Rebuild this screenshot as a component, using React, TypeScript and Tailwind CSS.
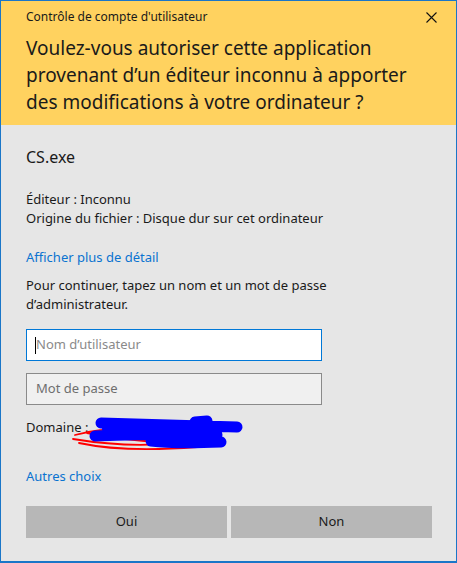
import React from 'react';

function Scribble() {
  return (
    <svg className="absolute left-[66px] top-[410px]" width="190" height="42" viewBox="0 0 190 42" fill="none">
      {/* red pen underneath */}
      <path d="M8 24 C 30 18, 60 16, 90 19 M6 28 C 30 32, 70 36, 110 32 M12 32 C 40 38, 80 40, 130 36 M20 22 C 50 28, 90 32, 140 34"
        stroke="#ff0000" strokeWidth="1.8" strokeLinecap="round" />
      {/* blue pen over it */}
      <path d="M34 12 C 60 13, 100 14, 170 16 M28 25 C 60 24, 100 23, 150 24 M84 30 C 100 32, 130 32, 154 31 M128 11 L140 10"
        stroke="#0000ff" strokeWidth="11" strokeLinecap="round" />
      <path d="M40 18 C 80 18, 120 19, 150 20 M60 22 L140 26 M90 28 L150 29"
        stroke="#0000ff" strokeWidth="10" strokeLinecap="round" />
    </svg>
  );
}

export default function App() {
  return (
    <div className="relative w-[457px] h-[563px] bg-[#e6e6e6] border border-b-2 border-[#1a76c8] font-['Noto_Sans',sans-serif] text-[#1a1a1a] overflow-hidden">
      <div className="bg-[#ffd25f] h-[124px] px-[25px]">
        <div className="flex items-center justify-between h-[32px]">
          <span className="text-[12px]">Contrôle de compte d'utilisateur</span>
          <svg width="11" height="11" viewBox="0 0 11 11" className="mr-[-6px]">
            <path d="M0.5 0.5 L10.5 10.5 M10.5 0.5 L0.5 10.5" stroke="#111" strokeWidth="1.1" />
          </svg>
        </div>
        <p className="text-[19px] leading-[27px] mt-[2px]">
          Voulez-vous autoriser cette application provenant d’un éditeur inconnu à apporter des modifications à votre ordinateur ?
        </p>
      </div>

      <div className="px-[25px]">
        <div className="text-[16px] mt-[21px] leading-[22px]">CS.exe</div>
        <div className="text-[13px] leading-[19px] mt-[22px]">
          <div>Éditeur : Inconnu</div>
          <div>Origine du fichier : Disque dur sur cet ordinateur</div>
        </div>
        <div className="text-[13px] text-[#0a73d0] mt-[20px] leading-[18px]">Afficher plus de détail</div>
        <div className="text-[13px] leading-[18.5px] mt-[10px]">
          Pour continuer, tapez un nom et un mot de passe
          <br />d’administrateur.
        </div>

        <div className="mt-[16px] w-[296px] h-[32px] border border-[#0078d7] bg-white flex items-center px-[8px]">
          <span className="w-px h-[17px] bg-black" />
          <span className="text-[13px] text-[#8a8a8a]">Nom d’utilisateur</span>
        </div>
        <div className="mt-[12px] w-[296px] h-[32px] border border-[#8a8a8a] bg-[#f0f0f0] flex items-center px-[9px]">
          <span className="text-[13px] text-[#6e6e6e]">Mot de passe</span>
        </div>

        <div className="text-[13px] mt-[13px] leading-[18px]">Domaine : </div>

        <div className="text-[13px] text-[#0a73d0] mt-[31px] leading-[18px]">Autres choix</div>

        <div className="mt-[21px] flex gap-[4px] w-[406px]">
          <button className="flex-1 h-[32px] bg-[#b7b7b7] text-[13px]">Oui</button>
          <button className="flex-1 h-[32px] bg-[#b7b7b7] text-[13px]">Non</button>
        </div>
      </div>

      <Scribble />
    </div>
  );
}
